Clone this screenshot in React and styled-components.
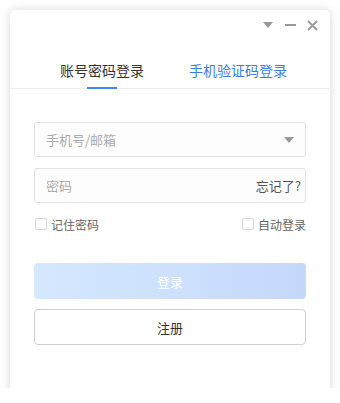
import styled, { createGlobalStyle } from "styled-components";

const GlobalStyle = createGlobalStyle`
  html, body {
    margin: 0;
    padding: 0;
    background: #fff;
    font-family: "Noto Sans CJK SC", "Noto Sans", sans-serif;
  }
`;

const Stage = styled.div`
  height: 388px;
  padding: 10px 10px 0;
  box-sizing: border-box;
  overflow: hidden;
`;

const Window = styled.div`
  height: 400px;
  background: #fff;
  border-radius: 5px;
  box-shadow: 0 0 10px rgba(0, 0, 0, 0.16);
  display: flex;
  flex-direction: column;
`;

const TitleBar = styled.div`
  height: 30px;
  display: flex;
  justify-content: flex-end;
  align-items: center;
  gap: 10px;
  padding: 0 12px 0 0;
`;

const TitleButton = styled.button`
  width: 12px;
  height: 12px;
  padding: 0;
  border: none;
  background: none;
  display: flex;
  align-items: center;
  justify-content: center;
  cursor: pointer;
  svg {
    display: block;
  }
`;

const Tabs = styled.div`
  display: grid;
  grid-template-columns: 1fr 1fr;
  padding: 0 24px;
  margin-top: 20px;
  border-bottom: 1px solid #ececec;
`;

const Tab = styled.div`
  position: relative;
  text-align: center;
  font-size: 14px;
  line-height: 20px;
  padding-bottom: 8px;
  color: ${(p) => (p.$active ? "#333" : "#3b7de0")};
  cursor: pointer;
  &::after {
    content: "";
    display: ${(p) => (p.$active ? "block" : "none")};
    position: absolute;
    left: 50%;
    bottom: -1px;
    width: 30px;
    height: 2px;
    margin-left: -15px;
    background: #3d88f2;
  }
`;

const Form = styled.div`
  padding: 33px 24px 0;
  display: flex;
  flex-direction: column;
`;

const Field = styled.div`
  height: 35px;
  box-sizing: border-box;
  border: 1px solid #e3e3e3;
  border-radius: 3px;
  background: #fdfdfd;
  display: flex;
  align-items: center;
  padding: 0 11px;
  margin-bottom: ${(p) => p.$mb || 0}px;
`;

const Input = styled.input`
  flex: 1;
  min-width: 0;
  border: none;
  outline: none;
  background: transparent;
  font-family: inherit;
  font-size: 13px;
  color: #333;
  padding: 0;
  &::placeholder {
    color: #aaa;
  }
`;

const Forgot = styled.span`
  font-size: 13px;
  color: #555;
  margin-right: -7px;
`;

const Options = styled.div`
  display: flex;
  justify-content: space-between;
  align-items: center;
  margin-top: 13px;
  height: 16px;
`;

const Check = styled.label`
  display: flex;
  align-items: center;
  gap: 4px;
  font-size: 12px;
  color: #666;
  cursor: pointer;
`;

const Box = styled.span`
  width: 12px;
  height: 12px;
  box-sizing: border-box;
  border: 1px solid #d6d6d6;
  border-radius: 2px;
  background: #fff;
  margin-left: 1px;
`;

const Button = styled.button`
  height: 36px;
  border-radius: 4px;
  font-family: inherit;
  font-size: 13px;
  cursor: pointer;
  margin-top: ${(p) => p.$mt}px;
  border: ${(p) => (p.$primary ? "none" : "1px solid #cfcfcf")};
  background: ${(p) =>
    p.$primary ? "linear-gradient(90deg, #d5e8fe 0%, #c5d8fc 100%)" : "#fff"};
  color: ${(p) => (p.$primary ? "#fff" : "#333")};
`;

export default function App() {
  return (
    <>
      <GlobalStyle />
      <Stage>
        <Window>
          <TitleBar>
            <TitleButton aria-label="menu">
              <svg width="10" height="6" viewBox="0 0 10 6">
                <path d="M0 0h10L5 6z" fill="#9a9a9a" />
              </svg>
            </TitleButton>
            <TitleButton aria-label="minimize">
              <svg width="11" height="2" viewBox="0 0 11 2">
                <rect width="11" height="2" fill="#9a9a9a" />
              </svg>
            </TitleButton>
            <TitleButton aria-label="close">
              <svg width="11" height="11" viewBox="0 0 11 11">
                <path d="M1 1l9 9M10 1l-9 9" stroke="#9a9a9a" strokeWidth="1.8" />
              </svg>
            </TitleButton>
          </TitleBar>
          <Tabs>
            <Tab $active>账号密码登录</Tab>
            <Tab>手机验证码登录</Tab>
          </Tabs>
          <Form>
            <Field $mb={11}>
              <Input placeholder="手机号/邮箱" />
              <svg width="10" height="6" viewBox="0 0 10 6">
                <path d="M0 0h10L5 6z" fill="#9a9a9a" />
              </svg>
            </Field>
            <Field>
              <Input type="password" placeholder="密码" />
              <Forgot>忘记了?</Forgot>
            </Field>
            <Options>
              <Check>
                <Box />
                记住密码
              </Check>
              <Check>
                <Box />
                自动登录
              </Check>
            </Options>
            <Button $primary $mt={31}>登录</Button>
            <Button $mt={10}>注册</Button>
          </Form>
        </Window>
      </Stage>
    </>
  );
}
